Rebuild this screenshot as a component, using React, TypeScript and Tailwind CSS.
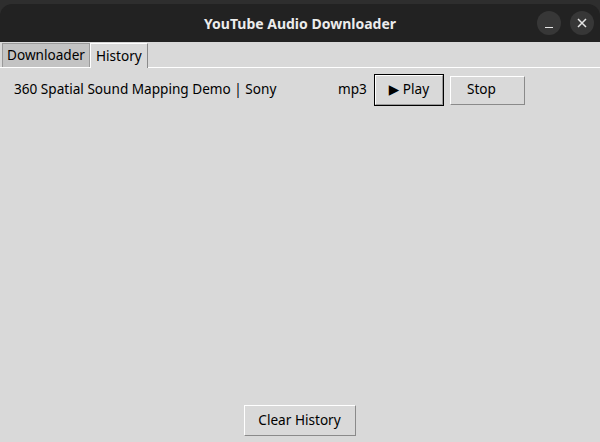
import React from "react";

const body = { fontFamily: '"Noto Sans", "DejaVu Sans", sans-serif' };

const App: React.FC = () => {
  return (
    <div className="w-[600px] h-[442px] bg-[#2e2e2e] pt-[4px] flex flex-col overflow-hidden" style={body}>
      {/* Title bar */}
      <div className="relative h-[38px] shrink-0 bg-[#222222] rounded-t-[12px] flex items-center justify-center">
        <span className="text-[#ececec] text-[14px] font-bold">YouTube Audio Downloader</span>
        <div className="absolute right-[6px] top-[7px] flex gap-[9px]">
          <div className="w-[24px] h-[24px] rounded-full bg-[#373737] flex items-end justify-center pb-[7px]">
            <div className="w-[8px] h-[1.5px] bg-[#e6e6e6]" />
          </div>
          <div className="w-[24px] h-[24px] rounded-full bg-[#373737] flex items-center justify-center">
            <svg width="10" height="10" viewBox="0 0 10 10">
              <path d="M1 1 L9 9 M9 1 L1 9" stroke="#e6e6e6" strokeWidth="1.5" />
            </svg>
          </div>
        </div>
      </div>

      {/* Window body */}
      <div className="flex-1 bg-[#d9d9d9] flex flex-col text-[13.6px] leading-[18px] text-black">
        {/* Tabs */}
        <div className="h-[26px] flex items-end pl-[2px] border-b border-white shrink-0">
          <div className="h-[24px] px-[4px] pb-[1px] flex items-center bg-[#c3c3c3] border border-b-0 border-t-[#9a9a9a] border-l-[#9a9a9a] border-r-[#9a9a9a]">
            Downloader
          </div>
          <div className="h-[25px] px-[5px] pb-[1px] flex items-center bg-[#d9d9d9] border border-b-0 border-t-white border-l-white border-r-[#8a8a8a] -mb-px relative">
            History
          </div>
        </div>

        {/* History row */}
        <div className="flex items-center h-[36px] mt-[4px]">
          <span className="pl-[14px] w-[338px] pb-[3px]">360 Spatial Sound Mapping Demo | Sony</span>
          <span className="w-[36px] pb-[3px]">mp3</span>
          <button className="w-[70px] h-[32px] border border-black bg-[#d9d9d9] flex items-center justify-center">
            <span className="w-full h-full pb-[2px] border border-t-white border-l-white border-b-[#9a9a9a] border-r-[#9a9a9a] flex items-center justify-center">
              ▶ Play
            </span>
          </button>
          <button className="ml-[6px] w-[75px] h-[29px] pb-[2px] bg-[#d9d9d9] border border-t-white border-l-white border-b-[#8a8a8a] border-r-[#8a8a8a] flex items-center pl-[16px]">
            Stop
          </button>
        </div>

        <div className="flex-1" />

        <div className="flex justify-center pb-[6px] pr-[1px]">
          <button className="w-[112px] h-[31px] pb-[2px] bg-[#d9d9d9] border border-t-white border-l-white border-b-[#8a8a8a] border-r-[#8a8a8a] flex items-center justify-center">
            Clear History
          </button>
        </div>
      </div>
    </div>
  );
};

export default App;
